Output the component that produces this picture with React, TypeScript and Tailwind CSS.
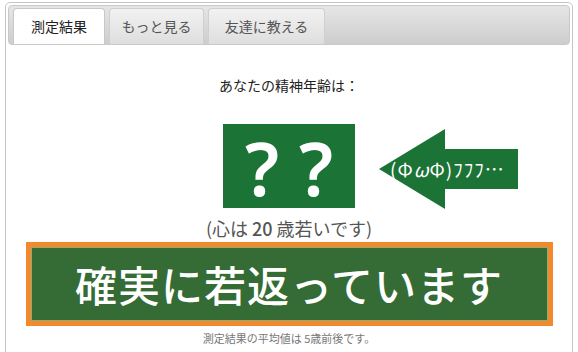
function Tab({ label, active, w }: { label: string; active?: boolean; w: string }) {
  return (
    <div
      className={
        active
          ? `${w} h-[36px] flex items-center justify-center rounded-t-[4px] border border-b-0 border-[#c8c8c8] bg-white text-[14px] text-[#222]`
          : `${w} h-[36px] flex items-center justify-center rounded-t-[4px] border border-b-0 border-[#cfcfcf] bg-gradient-to-b from-[#f2f2f2] to-[#dedede] text-[14px] text-[#555]`
      }
    >
      {label}
    </div>
  )
}

export default function App() {
  return (
    <div className="w-[578px] h-[352px] overflow-hidden bg-white" style={{ fontFamily: '"Noto Sans CJK JP", "Noto Sans", sans-serif' }}>
      <div className="ml-[5px] mr-[5px] mt-[2px] h-[360px] border border-[#c6c6c6] rounded-t-[5px]">
        <div className="m-[2px] h-[40px] rounded-[4px] border border-[#c9c9c9] bg-gradient-to-b from-[#e6e6e6] to-[#cdcdcd] flex items-end pl-[4px] gap-[4px]">
          <Tab label="測定結果" active w="w-[92px]" />
          <Tab label="もっと見る" w="w-[95px]" />
          <Tab label="友達に教える" w="w-[117px]" />
        </div>

        <div className="flex flex-col items-center">
          <div className="mt-[29px] text-[14px] leading-[18px] text-[#222]">あなたの精神年齢は：</div>

          <div className="mt-[29px] w-full grid grid-cols-[1fr_auto_1fr] items-center">
            <div />
            <div className="w-[132px] h-[84px] bg-[#1b7335] flex items-center justify-center gap-[20px] text-white text-[74px] font-semibold leading-none pt-[4px]" style={{ fontFamily: '"Noto Sans", sans-serif' }}>
              <span>?</span>
              <span>?</span>
            </div>
            <div className="pl-[24px] pt-[6px]">
              <div className="relative w-[140px] h-[80px]">
                <svg width="140" height="80" viewBox="0 0 140 80" className="absolute inset-0">
                  <polygon points="0,40 66,0 66,20 139,20 139,60 66,60 66,80" fill="#1b7335" />
                </svg>
                <div className="absolute left-[11px] top-[27px] text-white text-[19px] leading-[26px] tracking-[1px] whitespace-nowrap">
                  (Φ<span className="italic">ω</span>Φ)ﾌﾌﾌ…
                </div>
              </div>
            </div>
          </div>

          <div className="mt-[7px] text-[18px] leading-[24px] text-[#555]">
            (心は <span className="font-medium">20</span> 歳若いです)
          </div>

          <div className="mt-[2px] w-[527px] h-[84px] bg-[#f2892e] p-[5px]">
            <div className="w-full h-full bg-[#356b34] border border-[#8fae6e] flex items-center justify-center text-white text-[42px] font-medium tracking-[1px] leading-none">
              確実に若返っています
            </div>
          </div>

          <div className="mt-[5px] text-[11px] leading-[14px] text-[#777]">測定結果の平均値は 5歳前後です。</div>
        </div>
      </div>
    </div>
  )
}
